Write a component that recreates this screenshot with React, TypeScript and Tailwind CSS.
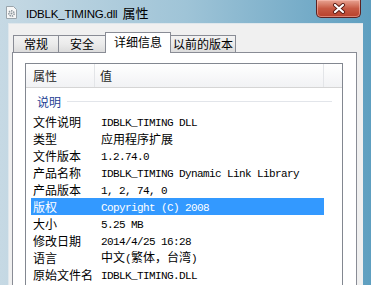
import * as React from "react";

const cjk = "font-['Noto_Sans_CJK_SC',sans-serif]";
const mono = "font-['Liberation_Mono','Noto_Sans_CJK_SC',monospace] text-[11px] tracking-[-0.6px]";

interface Row {
  label: string;
  value: React.ReactNode;
  selected?: boolean;
}

const rows: Row[] = [
  { label: "文件说明", value: <span className={mono}>IDBLK_TIMING DLL</span> },
  { label: "类型", value: <span className={`${cjk} text-[12px]`}>应用程序扩展</span> },
  { label: "文件版本", value: <span className={mono}>1.2.74.0</span> },
  { label: "产品名称", value: <span className={mono}>IDBLK_TIMING Dynamic Link Library</span> },
  { label: "产品版本", value: <span className={mono}>1, 2, 74, 0</span> },
  { label: "版权", value: <span className={mono}>Copyright (C) 2008</span>, selected: true },
  { label: "大小", value: <span className={mono}>5.25 MB</span> },
  { label: "修改日期", value: <span className={mono}>2014/4/25 16:28</span> },
  {
    label: "语言",
    value: (
      <span className={`${cjk} text-[12px]`}>
        中文<span className={mono}>(</span>繁体，台湾<span className={mono}>)</span>
      </span>
    ),
  },
  { label: "原始文件名", value: <span className={mono}>IDBLK_TIMING.DLL</span> },
];

function Tab({ label, width, active }: { label: string; width: string; active?: boolean }) {
  if (active) {
    return (
      <div
        className={`relative z-10 -mb-px -ml-px flex h-[21px] items-center justify-center border border-b-0 border-[#898c95] bg-white pb-[2px] text-[12px] text-black ${width} ${cjk}`}
      >
        {label}
      </div>
    );
  }
  return (
    <div
      className={`-ml-px flex h-[17px] items-center justify-center border border-b-0 border-[#898c95] bg-gradient-to-b from-[#f3f3f3] via-[#ebebeb] to-[#dcdcdc] text-[12px] text-black first:ml-0 ${width} ${cjk}`}
    >
      {label}
    </div>
  );
}

function FileIcon() {
  return (
    <svg width="11" height="13" viewBox="0 0 11 13">
      <path d="M0.5 0.5h7l3 3v9h-10z" fill="#f7f7f7" stroke="#9aa4ab" />
      <circle cx="5.5" cy="7.5" r="2.6" fill="none" stroke="#8c959c" strokeWidth="1.6" strokeDasharray="1.4 0.9" />
      <circle cx="5.5" cy="7.5" r="1" fill="#8c959c" />
    </svg>
  );
}

function CloseButton() {
  return (
    <div className="flex h-[18px] w-[45px] items-center justify-center rounded-b-[5px] border border-t-0 border-[#5b2222] bg-gradient-to-b from-[#e8a493] via-[#c75a44] to-[#b8402b] shadow-[inset_0_0_0_1px_rgba(255,200,190,0.5)]">
      <svg width="14" height="11" viewBox="0 0 14 11">
        <path d="M3 2l8 7M11 2l-8 7" stroke="#5a1a12" strokeWidth="4" strokeLinecap="round" />
        <path d="M3 2l8 7M11 2l-8 7" stroke="#ffffff" strokeWidth="2.2" strokeLinecap="round" />
      </svg>
    </div>
  );
}

export default function App() {
  return (
    <div className="flex h-[285px] w-[371px] flex-col overflow-hidden bg-gradient-to-r from-[#c6d9e4] via-[#9fc4d7] to-[#5e9fc0]">
      {/* title bar */}
      <div className="flex h-[23px] shrink-0 items-start">
        <div className="ml-[6px] mt-[6px]">
          <FileIcon />
        </div>
        <div className="ml-[9px] mt-[3px] flex items-baseline text-black">
          <span className="font-['Liberation_Sans',sans-serif] text-[11.5px] tracking-[-0.2px]">IDBLK_TIMING.dll</span>
          <span className={`ml-[5px] text-[13px] ${cjk}`}>属性</span>
        </div>
        <div className="ml-auto mr-[10px]">
          <CloseButton />
        </div>
      </div>

      {/* client area */}
      <div className="ml-[8px] flex h-[300px] w-[355px] shrink-0 flex-col border-l border-t border-[#dfe7ec] bg-[#f0f0f0]">
        <div className="flex h-[28px] shrink-0 items-end pl-[4px]">
          <Tab label="常规" width="w-[46px]" />
          <Tab label="安全" width="w-[48px]" />
          <Tab label="详细信息" width="w-[66px]" active />
          <Tab label="以前的版本" width="w-[66px]" />
        </div>

        <div className="ml-[3px] flex w-[345px] flex-1 flex-col border border-[#898c95] bg-white pl-[12px] pt-[10px]">
          <div className="flex w-[318px] flex-1 flex-col border border-[#828790] bg-white">
            {/* header */}
            <div className={`flex h-[24px] shrink-0 border-b border-[#d5d5d5] bg-gradient-to-b from-white to-[#f1f2f4] text-[12px] text-[#1e1e1e] ${cjk}`}>
              <div className="flex w-[69px] items-center border-r border-[#e3e5e8] pl-[7px]">属性</div>
              <div className="flex w-[229px] items-center border-r border-[#e3e5e8] pl-[5px]">值</div>
              <div className="flex-1" />
            </div>

            {/* group */}
            <div className="flex h-[25px] shrink-0 items-center pt-[2px] pl-[11px]">
              <span className={`text-[12px] text-[#1e3f94] ${cjk}`}>说明</span>
              <div className="ml-[6px] h-px w-[265px] bg-[#e2e5ea]" />
            </div>

            {rows.map((r) => (
              <div key={r.label} className="flex h-[17px] shrink-0">
                <div
                  className={`ml-[5px] flex w-[293px] items-center ${r.selected ? "bg-[#3399ff] text-white" : "text-black"}`}
                >
                  <span className={`w-[70px] shrink-0 pl-[2px] text-[12px] leading-[17px] ${cjk}`}>{r.label}</span>
                  <span className="whitespace-nowrap leading-[17px]">{r.value}</span>
                </div>
              </div>
            ))}
          </div>
        </div>
      </div>
    </div>
  );
}
